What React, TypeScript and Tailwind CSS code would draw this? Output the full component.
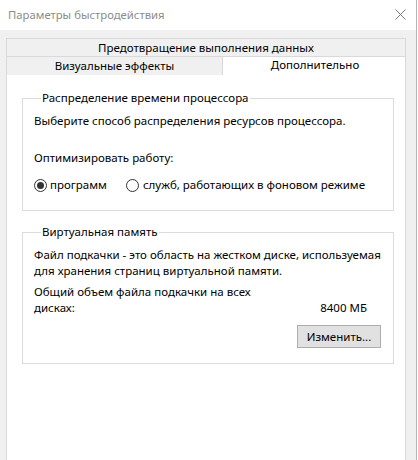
import React from "react";

const font = { fontFamily: '"Noto Sans", "Open Sans", Arial, sans-serif' };

function Radio({ checked }: { checked?: boolean }) {
  return (
    <span className="w-[13px] h-[13px] rounded-full border border-[#333333] bg-white flex items-center justify-center shrink-0">
      {checked && <span className="w-[7px] h-[7px] rounded-full bg-[#333333]" />}
    </span>
  );
}

export default function App() {
  return (
    <div className="w-[418px] h-[460px] flex overflow-hidden bg-white text-[11.5px] leading-[16px] text-black" style={font}>
      <div className="w-[416px] flex flex-col">
        <div className="h-[30px] bg-white flex items-center justify-between pl-[8px] pr-[10px] shrink-0">
          <span className="text-[#8c8c8c] text-[11.3px]">Параметры быстродействия</span>
          <svg width="11" height="11" viewBox="0 0 11 11" className="mt-[-2px]">
            <path d="M0.5 0.5 L10.5 10.5 M10.5 0.5 L0.5 10.5" stroke="#7a7a7a" strokeWidth="1" />
          </svg>
        </div>
        <div className="flex-1 bg-[#f0f0f0] pt-[8px] pl-[6px] pr-[10px] flex flex-col">
          <div className="w-[400px] flex flex-col">
            <div className="h-[18px] border border-b-0 border-[#d9d9d9] flex items-center justify-center">
              Предотвращение выполнения данных
            </div>
            <div className="h-[19px] flex border-t border-[#d9d9d9]">
              <div className="w-[216px] border-l border-[#d9d9d9] flex items-center justify-center">
                Визуальные эффекты
              </div>
              <div className="flex-1 bg-white border-l border-r border-[#d9d9d9] flex items-start justify-center pl-[2px]">
                Дополнительно
              </div>
            </div>
            <div className="h-[400px] bg-white border border-t-0 border-[#d9d9d9] pl-[15px] pr-[11px] pt-[15px] flex flex-col">
              <fieldset className="border border-[#dcdcdc] pl-[11px] pr-[10px] pt-[7px] pb-[17px] whitespace-nowrap">
                <legend className="ml-[7px] px-[1px]">Распределение времени процессора</legend>
                <div>Выберите способ распределения ресурсов процессора.</div>
                <div className="mt-[21px]">Оптимизировать работу:</div>
                <div className="mt-[11px] flex items-center">
                  <Radio checked />
                  <span className="ml-[3px]">программ</span>
                  <span className="ml-[19px]"><Radio /></span>
                  <span className="ml-[4px]">служб, работающих в фоновом режиме</span>
                </div>
              </fieldset>
              <fieldset className="mt-[13px] border border-[#dcdcdc] pl-[11px] pr-[12px] pt-[7px] pb-[15px]">
                <legend className="ml-[7px] px-[1px]">Виртуальная память</legend>
                <div className="whitespace-nowrap">
                  Файл подкачки - это область на жестком диске, используемая
                  <br />
                  для хранения страниц виртуальной памяти.
                </div>
                <div className="mt-[5px] flex items-end justify-between">
                  <div className="w-[225px]">Общий объем файла подкачки на всех дисках:</div>
                  <div className="mr-[14px]">8400 МБ</div>
                </div>
                <div className="mt-[9px] flex justify-end">
                  <button className="w-[84px] h-[23px] bg-[#e1e1e1] border border-[#adadad] flex items-center justify-center">
                    Изменить...
                  </button>
                </div>
              </fieldset>
            </div>
          </div>
        </div>
      </div>
      <div className="w-[1px] bg-[#b5b5b5]" />
      <div className="w-[1px] bg-white" />
    </div>
  );
}
